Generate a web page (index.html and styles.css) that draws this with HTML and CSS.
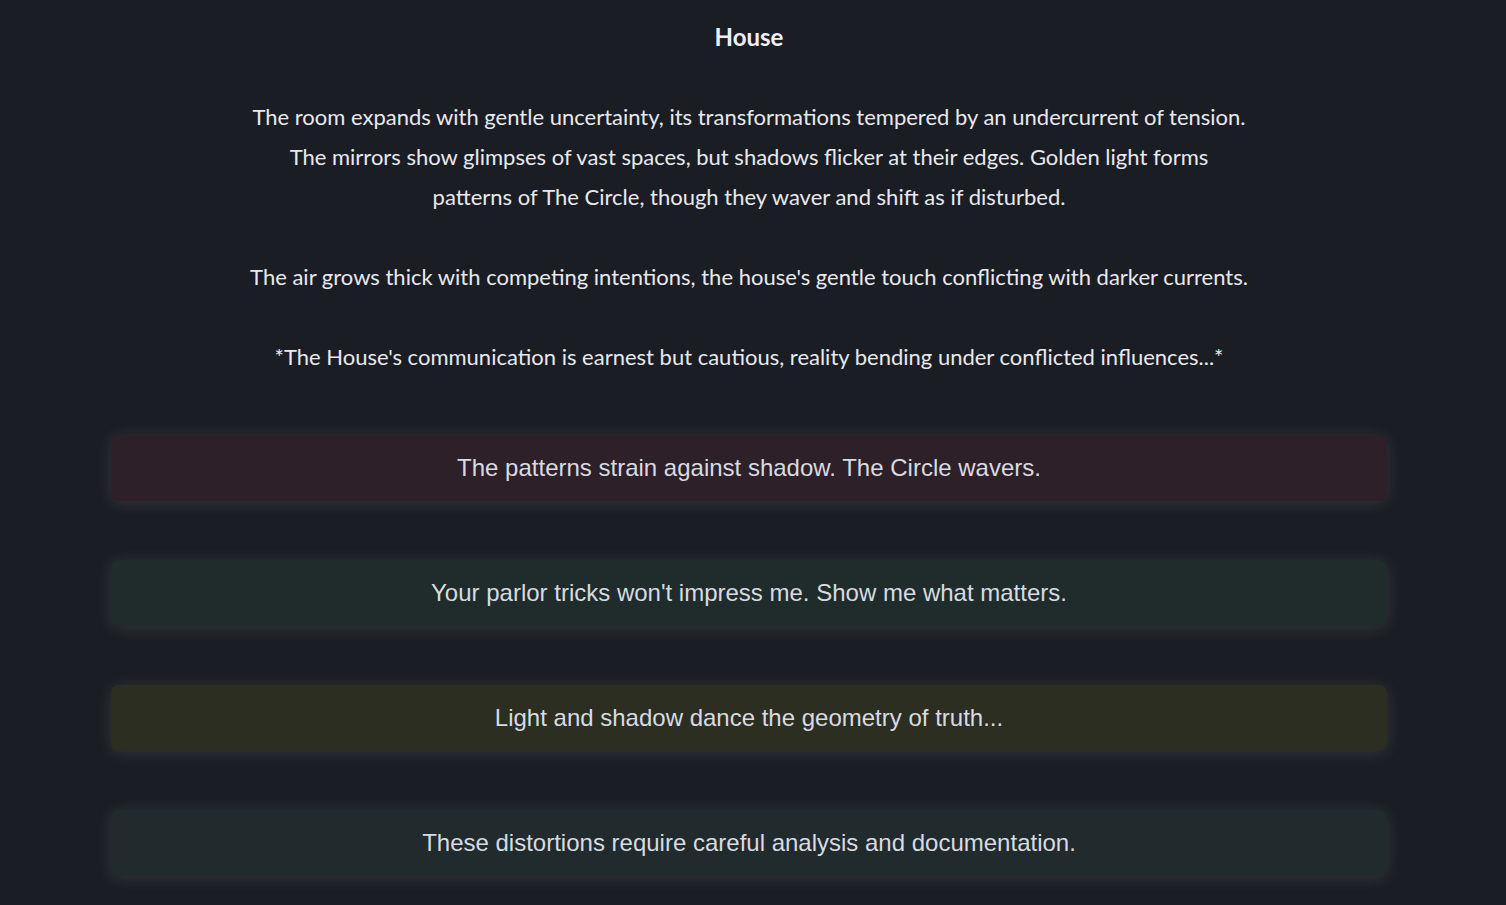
FILE: index.html
```html
<!DOCTYPE html>
<html lang="en">
<head>
    <meta charset="UTF-8">
    <meta name="viewport" content="width=device-width, initial-scale=1.0">
    <title>House</title>
    <link rel="stylesheet" href="styles.css">
</head>
<body>

    <div class="scene">
        <h2 class="speaker">House</h2>

        <div class="story">
            <p>The room expands with gentle uncertainty, its transformations tempered by an undercurrent of tension.<br>
            The mirrors show glimpses of vast spaces, but shadows flicker at their edges. Golden light forms<br>
            patterns of The Circle, though they waver and shift as if disturbed.</p>

            <p>The air grows thick with competing intentions, the house's gentle touch conflicting with darker currents.</p>

            <p>*The House's communication is earnest but cautious, reality bending under conflicted influences...*</p>
        </div>

        <div class="choices">
            <button class="choice choice-shadow">The patterns strain against shadow. The Circle wavers.</button>
            <button class="choice choice-skeptic">Your parlor tricks won't impress me. Show me what matters.</button>
            <button class="choice choice-light">Light and shadow dance the geometry of truth...</button>
            <button class="choice choice-analyst">These distortions require careful analysis and documentation.</button>
        </div>
    </div>

</body>
</html>
```

FILE: styles.css
```css
body {
    margin: 0;
    padding: 0 8px 0 0;
    background-color: #1b1d25;
    color: #e8e9ee;
    font-family: Lato, "Open Sans", sans-serif;
}

.scene {
    max-width: 1276px;
    margin: 0 auto;
    padding: 19px 0 40px;
}

.speaker {
    margin: 0 0 42px;
    font-size: 24px;
    line-height: 36px;
    font-weight: bold;
    text-align: center;
    color: #eef0f6;
}

.story {
    text-align: center;
    font-size: 22px;
    line-height: 40px;
}

.story p {
    margin: 0 0 40px;
}

.story p:last-child {
    margin-bottom: 0;
}

.choices {
    display: flex;
    flex-direction: column;
    gap: 59px;
    margin-top: 58px;
}

.choice {
    width: 100%;
    padding: 20px;
    border: none;
    border-radius: 8px;
    font-family: "Liberation Sans", Arial, sans-serif;
    font-size: 24px;
    line-height: 26px;
    color: #d7dbe2;
    text-align: center;
    cursor: pointer;
    box-shadow: 0 2px 16px rgba(190, 195, 205, 0.16);
}

.choice-shadow {
    background-color: #2e2029;
}

.choice-skeptic {
    background-color: #202b2b;
}

.choice-light {
    background-color: #2d2e22;
}

.choice-analyst {
    background-color: #212a2c;
}
```
